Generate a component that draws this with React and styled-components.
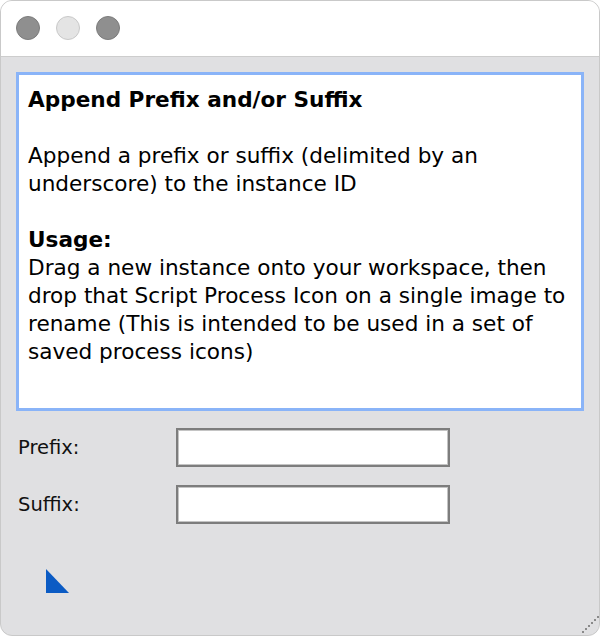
import React from 'react'
import styled, { createGlobalStyle } from 'styled-components'

//main function
export default function App() {
  return (
    <>
      <Global />
      <Window>
        <TitleBar>
          <Light $tone="dark" />
          <Light $tone="light" />
          <Light $tone="dark" />
        </TitleBar>
        <Body>
          <Description>
            <Heading>Append Prefix and/or Suffix</Heading>
            <Blank />
            <Line>Append a prefix or suffix (delimited by an underscore) to the instance ID</Line>
            <Blank />
            <Heading>Usage:</Heading>
            <Line>
              Drag a new instance onto your workspace, then drop that Script Process Icon on a single image to rename (This is intended to be used in a set of saved process icons)
            </Line>
          </Description>
          <Fields>
            <Field>
              <Label>Prefix:</Label>
              <TextInput type="text" />
            </Field>
            <Field>
              <Label>Suffix:</Label>
              <TextInput type="text" />
            </Field>
          </Fields>
          <Footer>
            <svg width="23" height="24" viewBox="0 0 23 24">
              <polygon points="0,0 0,24 23,24" fill="#0b5bc4" />
            </svg>
          </Footer>
        </Body>
        <Grip>
          <svg width="22" height="22" viewBox="0 0 22 22">
            {[0, 3, 6, 9, 12, 15].map((d) => (
              <rect key={d} x={20 - d} y={3 + d} width="2" height="2" fill="#8a8a8a" />
            ))}
          </svg>
        </Grip>
      </Window>
    </>
  )
}

//styled components
const Global = createGlobalStyle`
  html, body {
    margin: 0;
    padding: 0;
    background: #ffffff;
  }
  * { box-sizing: border-box; }
`
const Window = styled.div`
  position: relative;
  width: 600px;
  height: 636px;
  display: flex;
  flex-direction: column;
  background: #e0e0e2;
  border: 1px solid #c9c9c9;
  border-radius: 12px;
  overflow: hidden;
  font-family: "DejaVu Sans", sans-serif;
`
const TitleBar = styled.div`
  height: 56px;
  flex-shrink: 0;
  display: flex;
  align-items: center;
  gap: 16px;
  padding-left: 15px;
  padding-bottom: 2px;
  background: #ffffff;
  border-bottom: 1px solid #cdcdcd;
`
const Light = styled.span`
  width: 24px;
  height: 24px;
  border-radius: 50%;
  background: ${(p) => (p.$tone === 'dark' ? '#8f8f8f' : '#e4e4e4')};
  border: 1px solid ${(p) => (p.$tone === 'dark' ? '#7c7c7c' : '#c9c9c9')};
`
const Body = styled.div`
  flex: 1;
  display: flex;
  flex-direction: column;
  padding: 15px 15px 0 15px;
`
const Description = styled.div`
  height: 339px;
  background: #ffffff;
  border: 3px solid #8ab4f8;
  padding: 11px 9px;
  color: #000;
  font-size: 21.6px;
  line-height: 28px;
`
const Heading = styled.div`
  font-weight: bold;
`
const Line = styled.div``
const Blank = styled.div`
  height: 28px;
`
const Fields = styled.div`
  display: flex;
  flex-direction: column;
  gap: 18px;
  margin-top: 17px;
`
const Field = styled.div`
  display: flex;
  align-items: center;
`
const Label = styled.label`
  width: 160px;
  padding-left: 2px;
  font-size: 19.5px;
  color: #111;
`
const TextInput = styled.input`
  width: 274px;
  height: 39px;
  background: #ffffff;
  border: 2px solid #7d7d7d;
  box-shadow: inset 1px 1px 0 #c4c4c4, inset -1px -1px 0 #c4c4c4;
  outline: none;
`
const Footer = styled.div`
  display: flex;
  padding-left: 30px;
  margin-top: 45px;
`
const Grip = styled.div`
  position: absolute;
  right: 0;
  bottom: 0;
  line-height: 0;
`
